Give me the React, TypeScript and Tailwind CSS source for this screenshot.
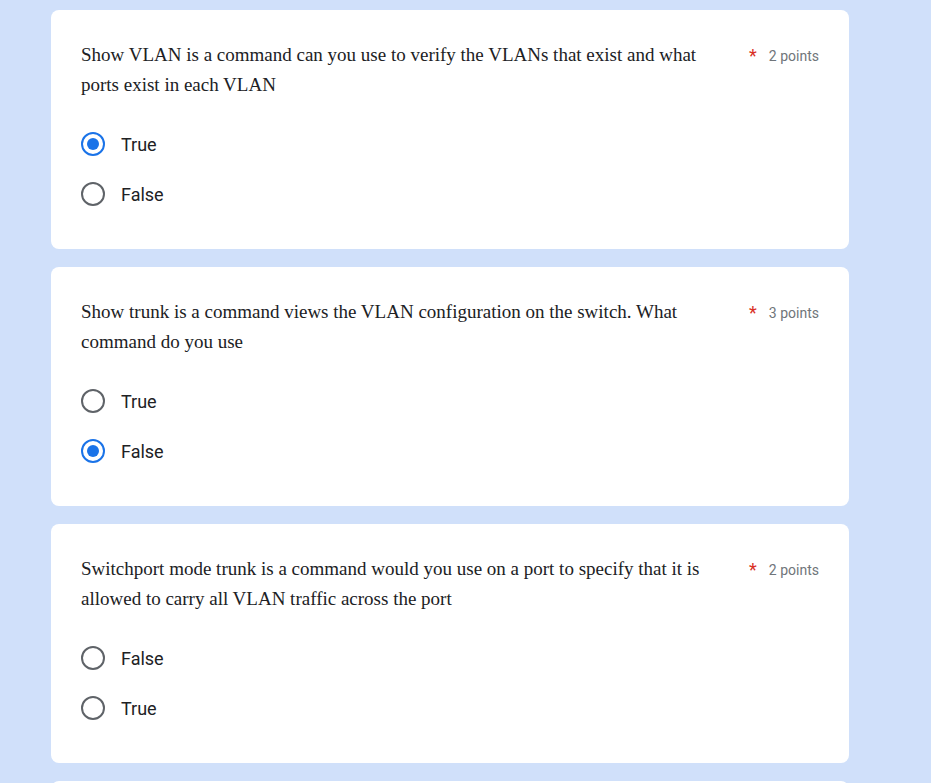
import React from "react";

interface Question {
  id: string;
  lines: string[];
  points: number;
  options: string[];
  selected?: string;
}

const questions: Question[] = [
  {
    id: "q1",
    lines: [
      "Show VLAN is a command can you use to verify the VLANs that exist and what",
      "ports exist in each VLAN",
    ],
    points: 2,
    options: ["True", "False"],
    selected: "True",
  },
  {
    id: "q2",
    lines: [
      "Show trunk is a command views the VLAN configuration on the switch. What",
      "command do you use",
    ],
    points: 3,
    options: ["True", "False"],
    selected: "False",
  },
  {
    id: "q3",
    lines: [
      "Switchport mode trunk is a command would you use on a port to specify that it is",
      "allowed to carry all VLAN traffic across the port",
    ],
    points: 2,
    options: ["False", "True"],
  },
];

function Radio({ checked }: { checked: boolean }) {
  return (
    <span
      className={
        checked
          ? "flex h-[24px] w-[24px] items-center justify-center rounded-full border-2 border-[#1a73e8]"
          : "flex h-[24px] w-[24px] items-center justify-center rounded-full border-2 border-[#5f6368]"
      }
    >
      {checked && <span className="h-[12px] w-[12px] rounded-full bg-[#1a73e8]" />}
    </span>
  );
}

function QuestionCard({ q }: { q: Question }) {
  return (
    <div className="rounded-lg bg-white px-[30px] pt-[30px] pb-[30px]">
      <div className="flex items-start justify-between">
        <div
          className="w-[660px] whitespace-nowrap text-[19px] leading-[30px] text-[#202124]"
          style={{ fontFamily: '"Liberation Serif", serif' }}
        >
          {q.lines.map((l, i) => (
            <div key={i}>{l}</div>
          ))}
        </div>
        <div className="flex items-center gap-[12px] pt-[5px] font-['Roboto',sans-serif] text-[14px] leading-[22px] text-[#70757a]">
          <span className="text-[18px] text-[#d93025]">*</span>
          <span>{q.points} points</span>
        </div>
      </div>
      <div className="mt-[19px] flex flex-col">
        {q.options.map((o) => (
          <label key={o} className="flex h-[50px] items-center gap-[16px]">
            <Radio checked={q.selected === o} />
            <span className="font-['Roboto',sans-serif] text-[18px] text-[#202124]">{o}</span>
          </label>
        ))}
      </div>
    </div>
  );
}

export default function App() {
  return (
    <div className="h-[783px] overflow-hidden bg-[#d0e0fa] pt-[10px]">
      <div className="ml-[51px] flex w-[798px] flex-col gap-[18px]">
        {questions.map((q) => (
          <QuestionCard key={q.id} q={q} />
        ))}
        <div className="h-[120px] rounded-lg bg-white" />
      </div>
    </div>
  );
}
